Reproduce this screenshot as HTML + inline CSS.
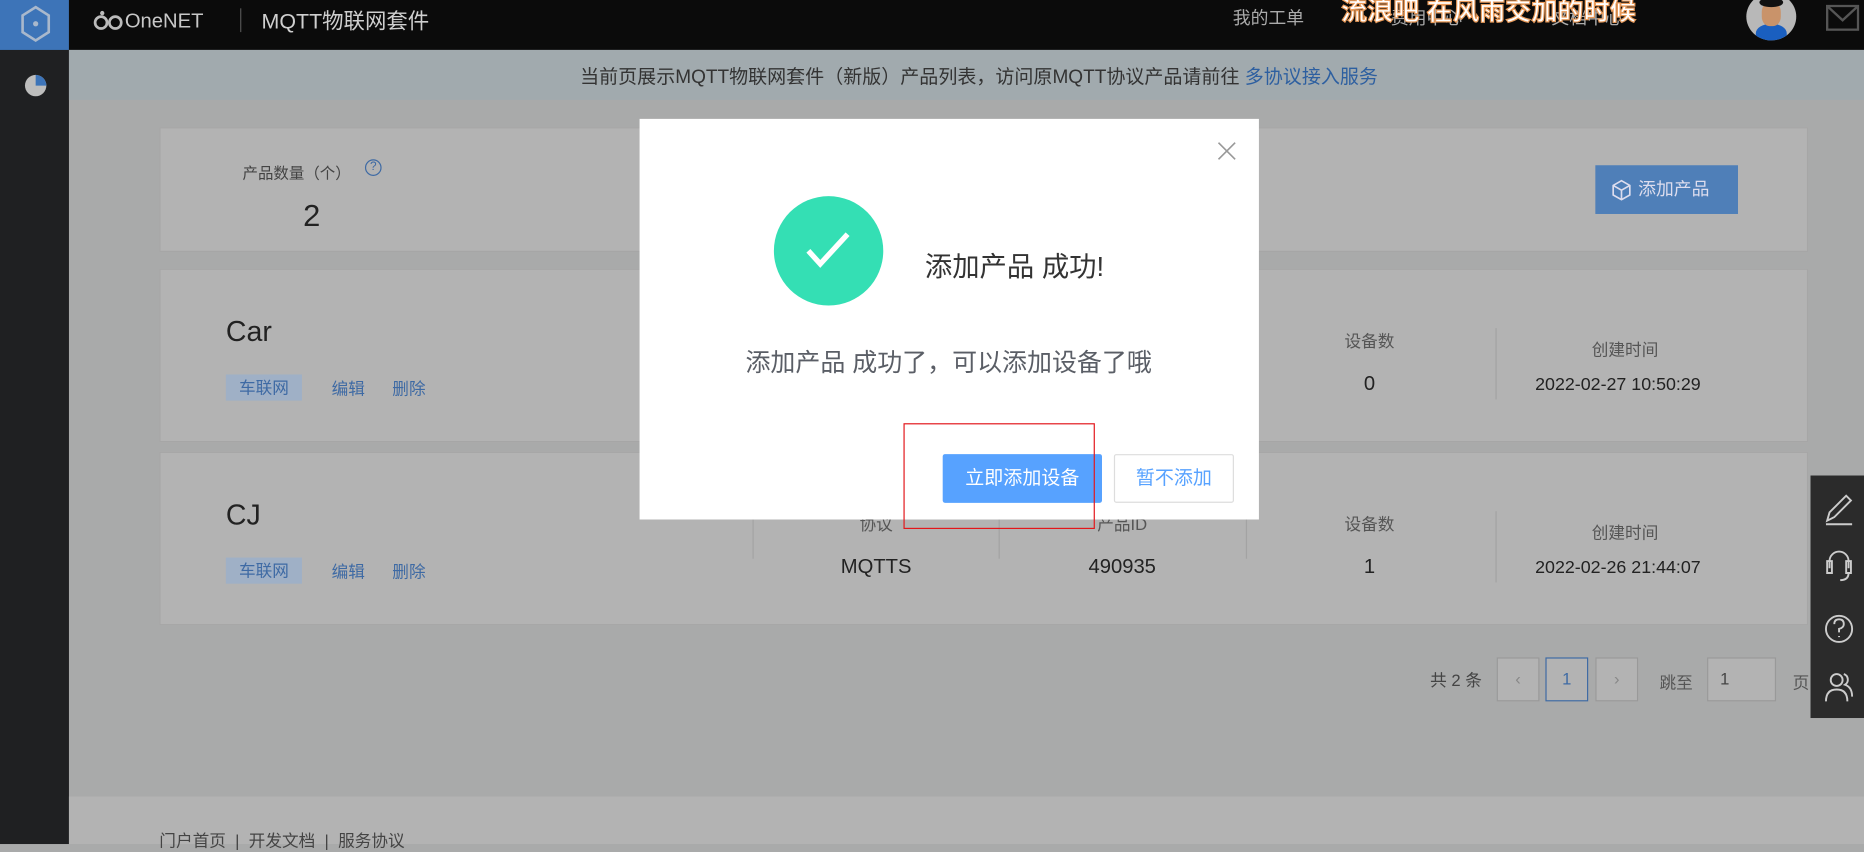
<!DOCTYPE html>
<html><head><meta charset="utf-8"><style>
*{margin:0;padding:0;box-sizing:border-box}
body{width:1864px;height:844px;overflow:hidden;background:#a9aaaa;font-family:"Liberation Sans","Noto Sans CJK SC",sans-serif}
#s{position:absolute;left:0;top:0;width:1568px;height:710px;transform:scale(1.18878);transform-origin:0 0;background:#a9aaaa}
.a{position:absolute;white-space:nowrap}
.card{position:absolute;left:134px;width:1387px;background:#b3b3b3;border:1px solid #a6a6a6}
.c{transform:translateX(-50%);text-align:center}
.lab{font-size:14px;color:#555}
.val{font-size:17px;color:#222}
.vd{position:absolute;width:1px;background:#a3a3a3}
.tag{position:absolute;left:56px;width:64px;height:22px;background:#9fb0c6;color:#3e6aa4;font-size:14px;text-align:center;line-height:22px}
.lk{color:#3e6aa4;font-size:14px}
.pg{position:absolute;top:553px;width:36px;height:37px;border:1px solid #999;background:#b3b3b3;text-align:center;line-height:35px;color:#888;font-size:14px}
</style></head><body><div id="s">
<div class="a" style="left:0;top:0;width:58px;height:710px;background:#1f2022"></div>
<div class="a" style="left:0;top:0;width:58px;height:42px;background:#3d74b8"></div>
<svg class="a" style="left:17px;top:4px" width="26" height="32" viewBox="0 0 26 32"><polygon points="13,2 24,9 24,23 13,30 2,23 2,9" fill="none" stroke="#a9b8cc" stroke-width="2.2"/><circle cx="13" cy="16" r="2.2" fill="#a9b8cc"/></svg>
<svg class="a" style="left:20px;top:62px" width="20" height="20" viewBox="0 0 20 20"><circle cx="10" cy="10" r="9" fill="#bdbdbd"/><path d="M10 1A9 9 0 0 1 19 10H10Z" fill="#3d74b8"/></svg>
<div class="a" style="left:58px;top:0;width:1510px;height:42px;background:#0b0b0b"></div>
<svg class="a" style="left:78px;top:8px" width="28" height="18" viewBox="0 0 28 18"><circle cx="7" cy="11" r="5" fill="none" stroke="#bbb" stroke-width="2.3"/><circle cx="19" cy="11" r="5" fill="none" stroke="#bbb" stroke-width="2.3"/><circle cx="8" cy="3" r="1.8" fill="#bbb"/></svg>
<div class="a" style="left:105px;top:8px;font-size:17px;color:#c8c8c8">OneNET</div>
<div class="a" style="left:202px;top:7px;width:1px;height:20px;background:#555"></div>
<div class="a" style="left:220px;top:4px;font-size:18px;color:#cfcfcf">MQTT物联网套件</div>
<div class="a" style="left:1037px;top:4px;font-size:15px;color:#aaa">我的工单</div>
<div class="a" style="left:1170px;top:4px;font-size:15px;color:#aaa">费用中心</div>
<div class="a" style="left:1305px;top:4px;font-size:15px;color:#aaa">文档中心</div>
<div class="a" style="left:1128px;top:-8px;font-size:22px;font-weight:bold;color:#fff;-webkit-text-stroke:1px #e89a5a">流浪吧 在风雨交加的时候</div>
<div class="a" style="left:1469px;top:-6px;width:42px;height:40px;border-radius:50%;background:#b8b8b8;overflow:hidden"><div style="position:absolute;left:8px;top:26px;width:26px;height:16px;border-radius:50% 50% 0 0;background:#1a5fc0"></div><div style="position:absolute;left:13px;top:8px;width:16px;height:20px;border-radius:40%;background:#c9936a"></div><div style="position:absolute;left:11px;top:4px;width:20px;height:8px;border-radius:50%;background:#111"></div></div>
<svg class="a" style="left:1536px;top:4px" width="28" height="22" viewBox="0 0 28 22"><rect x="1" y="1" width="26" height="20" fill="none" stroke="#555" stroke-width="2"/><path d="M1 1L14 13L27 1" fill="none" stroke="#555" stroke-width="2"/></svg>
<div class="a" style="left:58px;top:42px;width:1510px;height:42px;background:#a1aaae"></div>
<div class="a" style="left:488px;top:51px;font-size:16px;color:#333">当前页展示MQTT物联网套件（新版）产品列表，访问原MQTT协议产品请前往 <span style="color:#2d5fa0">多协议接入服务</span></div>
<div class="card" style="top:107px;height:105px"></div>
<div class="a" style="left:204px;top:135px;font-size:13px;color:#444">产品数量（个）</div>
<div class="a" style="left:307px;top:134px;width:14px;height:14px;border:1px solid #3e6aa4;border-radius:50%;color:#3e6aa4;font-size:10px;text-align:center;line-height:12px">?</div>
<div class="a" style="left:255px;top:166px;font-size:26px;color:#222">2</div>
<div class="a" style="left:1342px;top:139px;width:120px;height:41px;background:#4f7fb8;color:#dde;font-size:15px;line-height:41px;padding-left:36px">添加产品</div>
<svg class="a" style="left:1355px;top:151px" width="18" height="18" viewBox="0 0 18 18"><path d="M9 1L16 5V13L9 17L2 13V5Z M2 5L9 9L16 5 M9 9V17" fill="none" stroke="#dde" stroke-width="1.4"/></svg>
<div class="card" style="top:226px;height:146px"></div>
<div class="a" style="left:190px;top:266px;font-size:24px;color:#222">Car</div>
<div class="tag" style="left:190px;top:315px">车联网</div>
<div class="a lk" style="left:279px;top:317px">编辑</div>
<div class="a lk" style="left:330px;top:317px">删除</div>
<div class="vd" style="left:1048px;top:276px;height:40px"></div>
<div class="vd" style="left:1258px;top:276px;height:60px"></div>
<div class="a lab c" style="left:1152px;top:277px">设备数</div>
<div class="a val c" style="left:1152px;top:313px">0</div>
<div class="a lab c" style="left:1367px;top:284px">创建时间</div>
<div class="a val c" style="left:1361px;top:315px;font-size:15px">2022-02-27 10:50:29</div>
<div class="card" style="top:380px;height:146px"></div>
<div class="a" style="left:190px;top:420px;font-size:24px;color:#222">CJ</div>
<div class="tag" style="left:190px;top:469px">车联网</div>
<div class="a lk" style="left:279px;top:471px">编辑</div>
<div class="a lk" style="left:330px;top:471px">删除</div>
<div class="vd" style="left:633px;top:430px;height:40px"></div>
<div class="vd" style="left:840px;top:430px;height:40px"></div>
<div class="vd" style="left:1048px;top:430px;height:40px"></div>
<div class="vd" style="left:1258px;top:430px;height:60px"></div>
<div class="a lab c" style="left:737px;top:431px">协议</div>
<div class="a val c" style="left:737px;top:467px">MQTTS</div>
<div class="a lab c" style="left:944px;top:431px">产品ID</div>
<div class="a val c" style="left:944px;top:467px">490935</div>
<div class="a lab c" style="left:1152px;top:431px">设备数</div>
<div class="a val c" style="left:1152px;top:467px">1</div>
<div class="a lab c" style="left:1367px;top:438px">创建时间</div>
<div class="a val c" style="left:1361px;top:469px;font-size:15px">2022-02-26 21:44:07</div>
<div class="a" style="left:1203px;top:562px;font-size:14px;color:#444">共 2 条</div>
<div class="pg" style="left:1259px">‹</div>
<div class="pg" style="left:1300px;border-color:#3e6aa4;color:#3e6aa4">1</div>
<div class="pg" style="left:1342px">›</div>
<div class="a" style="left:1396px;top:564px;font-size:14px;color:#555">跳至</div>
<div class="pg" style="left:1436px;width:58px;text-align:left;padding-left:10px;color:#444">1</div>
<div class="a" style="left:1508px;top:564px;font-size:14px;color:#555">页</div>
<div class="a" style="left:58px;top:670px;width:1510px;height:40px;background:#b3b3b3"></div>
<div class="a" style="left:134px;top:697px;font-size:14px;color:#444">门户首页 &nbsp;|&nbsp; 开发文档 &nbsp;|&nbsp; 服务协议</div>
<div class="a" style="left:1523px;top:400px;width:45px;height:204px;background:#2b2b2b"></div>
<svg class="a" style="left:1533px;top:414px" width="28" height="180" viewBox="0 0 28 180" fill="none" stroke="#ccc" stroke-width="1.6"><path d="M4 24L6 17L20 3L24 7L10 21Z M3 27H25"/><path d="M6 64V58A8 8 0 0 1 22 58V64 M4 58H8V68H4Z M20 58H24V68H20Z M22 68Q22 74 15 74"/><circle cx="14" cy="115" r="11"/><path d="M10 111Q10 107 14 107Q18 107 18 111Q18 114 14 115V118 M14 121V122"/><circle cx="12" cy="158" r="5"/><path d="M3 176Q3 166 12 166Q21 166 21 176 M18 153A5 5 0 0 1 19 162Q25 164 25 172"/></svg>
<div class="a" style="left:538px;top:100px;width:521px;height:337px;background:#fff"></div>
<svg class="a" style="left:1024px;top:119px" width="16" height="16" viewBox="0 0 16 16"><path d="M1 1L15 15M15 1L1 15" stroke="#999" stroke-width="1.4"/></svg>
<div class="a" style="left:651px;top:165px;width:92px;height:92px;border-radius:50%;background:#34dfb4"></div>
<svg class="a" style="left:675px;top:190px" width="44" height="40" viewBox="0 0 44 40"><path d="M5 21L15 32L38 7" fill="none" stroke="#fff" stroke-width="4.5"/></svg>
<div class="a" style="left:778px;top:205px;font-size:23px;color:#333">添加产品 成功!</div>
<div class="a c" style="left:798px;top:289px;font-size:21px;color:#5a5e66">添加产品 成功了，可以添加设备了哦</div>
<div class="a" style="left:793px;top:382px;width:134px;height:41px;background:#57a2ff;border-radius:2px;color:#fff;font-size:16px;text-align:center;line-height:41px">立即添加设备</div>
<div class="a" style="left:937px;top:382px;width:101px;height:41px;border:1px solid #ddd;border-radius:2px;color:#57a2ff;font-size:16px;text-align:center;line-height:39px">暂不添加</div>
<div class="a" style="left:760px;top:356px;width:161px;height:89px;border:1px solid #e3161b"></div>
</div></body></html>
